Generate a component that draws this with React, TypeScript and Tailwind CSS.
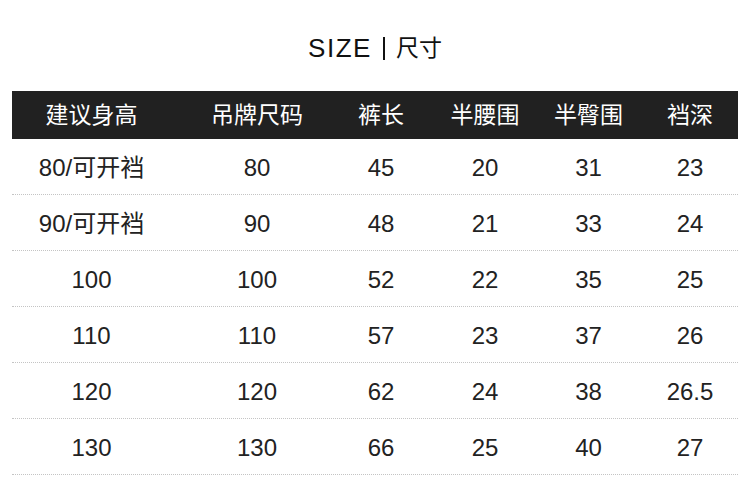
const font = "font-['Liberation_Sans','Noto_Sans_CJK_SC',sans-serif]";

const columns = ["建议身高", "吊牌尺码", "裤长", "半腰围", "半臀围", "裆深"];

const rows = [
  ["80/可开裆", "80", "45", "20", "31", "23"],
  ["90/可开裆", "90", "48", "21", "33", "24"],
  ["100", "100", "52", "22", "35", "25"],
  ["110", "110", "57", "23", "37", "26"],
  ["120", "120", "62", "24", "38", "26.5"],
  ["130", "130", "66", "25", "40", "27"],
];

// column tracks are set so each label sits centred where the picture has it
const grid = "grid grid-cols-[159px_172px_76px_132px_75px_128px]";

export default function App() {
  return (
    <div className={`h-[493px] w-[750px] overflow-hidden bg-white ${font}`}>
      <div className="flex h-[32px] items-center justify-center mt-[32px] text-[#111]">
        <span className="text-[26px] tracking-[1.5px]">SIZE</span>
        <span className="mx-[11px] h-[23px] w-[2px] bg-[#111]" />
        <span className="text-[23px]">尺寸</span>
      </div>

      <div className="ml-[12px] mt-[27px] w-[726px]">
        <div className={`${grid} h-[48px] items-center bg-[#212121] text-[23px] text-white`}>
          {columns.map((c) => (
            <div key={c} className="text-center">
              {c}
            </div>
          ))}
        </div>

        {rows.map((r) => (
          <div
            key={r[0]}
            className={`${grid} h-[56px] items-center border-b border-dotted border-[#c4c4c4] pt-[3px] text-[24px] text-[#222]`}
          >
            {r.map((v, i) => (
              <div key={i} className="text-center">
                {v}
              </div>
            ))}
          </div>
        ))}
      </div>
    </div>
  );
}
